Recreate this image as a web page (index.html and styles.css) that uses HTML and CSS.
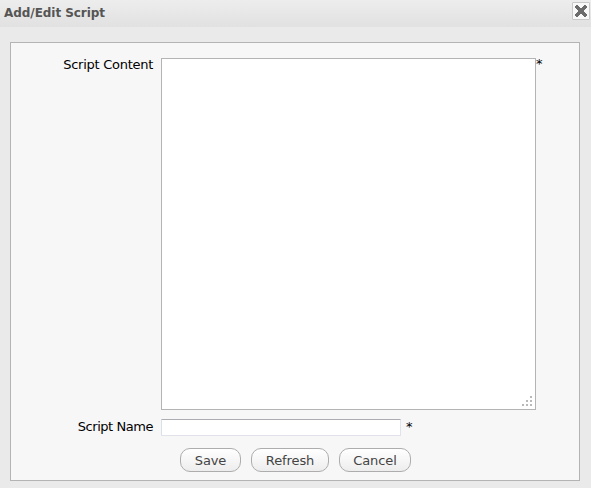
FILE: index.html
```html
<!DOCTYPE html>
<html lang="en">
<head>
<meta charset="utf-8">
<title>Add/Edit Script</title>
<link rel="stylesheet" href="styles.css">
</head>
<body>
<header class="titlebar">
  <h1 class="title">Add/Edit Script</h1>
  <button class="close" aria-label="Close">
    <svg width="12" height="12" viewBox="0 0 12 12" shape-rendering="crispEdges"><path d="M1 0h2v1h1v1h1v1h2v-1h1v-1h1v-1h2v1h1v2h-1v1h-1v1h-1v2h1v1h1v1h1v2h-1v1h-2v-1h-1v-1h-1v-1h-2v1h-1v1h-1v1h-2v-1h-1v-2h1v-1h1v-1h1v-2h-1v-1h-1v-1h-1v-2h1z" fill="#6b6b6b"/></svg>
  </button>
</header>
<form class="panel">
  <div class="row content-row">
    <label class="label" for="content">Script Content</label>
    <div class="editor">
      <textarea class="content" id="content"></textarea>
      <svg class="grip" width="10" height="10" viewBox="0 0 10 10" shape-rendering="crispEdges"><path d="M8 0h2v2h-2zM4 4h2v2h-2zM8 4h2v2h-2zM0 8h2v2h-2zM4 8h2v2h-2zM8 8h2v2h-2z" fill="#b9b9b9"/></svg>
    </div>
    <span class="required">*</span>
  </div>
  <div class="row name-row">
    <label class="label" for="name">Script Name</label>
    <input class="name" id="name" type="text">
    <span class="required name-required">*</span>
  </div>
  <div class="actions">
    <button class="button save" type="button">Save</button>
    <button class="button refresh" type="button">Refresh</button>
    <button class="button cancel" type="button">Cancel</button>
  </div>
</form>
</body>
</html>
```
FILE: styles.css
```css
* { box-sizing: border-box; }
body {
  margin: 0;
  height: 488px;
  overflow: hidden;
  background: #eaeaea;
  font: 13px/16px "DejaVu Sans", Verdana, sans-serif;
  color: #000;
}
.titlebar {
  display: flex;
  justify-content: space-between;
  height: 27px;
  padding: 2px 1px 0 4px;
  background: linear-gradient(#ededed, #e1e1e1);
}
.title {
  margin: 3px 0 0;
  font: bold 12px/16px "DejaVu Sans", Verdana, sans-serif;
  letter-spacing: -0.05px;
  color: #555;
}
.close {
  display: flex;
  align-items: center;
  justify-content: center;
  width: 18px;
  height: 18px;
  padding: 0;
  border: 1px solid #c8c8c8;
  border-radius: 1px;
  background: #f8f8f8;
}
.panel {
  width: 570px;
  height: 439px;
  margin: 15px 0 0 10px;
  padding-top: 15px;
  border: 1px solid #b4b4b4;
  background: #f7f7f7;
}
.row { display: flex; align-items: flex-start; }
.label {
  width: 142px;
  margin-right: 8px;
  text-align: right;
  white-space: nowrap;
  letter-spacing: -0.45px;
}
.content-row .label { margin-top: -1px; letter-spacing: -0.27px; }
.editor { position: relative; height: 352px; }
.content {
  display: block;
  width: 375px;
  height: 352px;
  border: 1px solid #b4b4b4;
  background: #fff;
  resize: none;
}
.grip { position: absolute; right: 4px; bottom: 4px; }
.required { margin-top: -2px; }
.name-row { margin-top: 9px; }
.name {
  width: 240px;
  height: 17px;
  padding: 0 2px;
  border: 1px solid #e2e3ea;
  border-top-color: #abadb3;
  border-left-color: #dbdfe6;
  border-radius: 1px;
  background: #fff;
}
.name-required { margin: 0 0 0 5px; }
.actions { display: flex; gap: 10px; margin: 12px 0 0 169px; }
.button {
  height: 24px;
  padding: 1px 0 0;
  border: 1px solid #adadad;
  border-radius: 10px;
  background: linear-gradient(#fff, #ededed);
  font: 13px/16px "DejaVu Sans", Verdana, sans-serif;
  letter-spacing: -0.1px;
  color: #444;
}
.save { width: 61px; }
.refresh { width: 78px; }
.cancel { width: 72px; }
```
